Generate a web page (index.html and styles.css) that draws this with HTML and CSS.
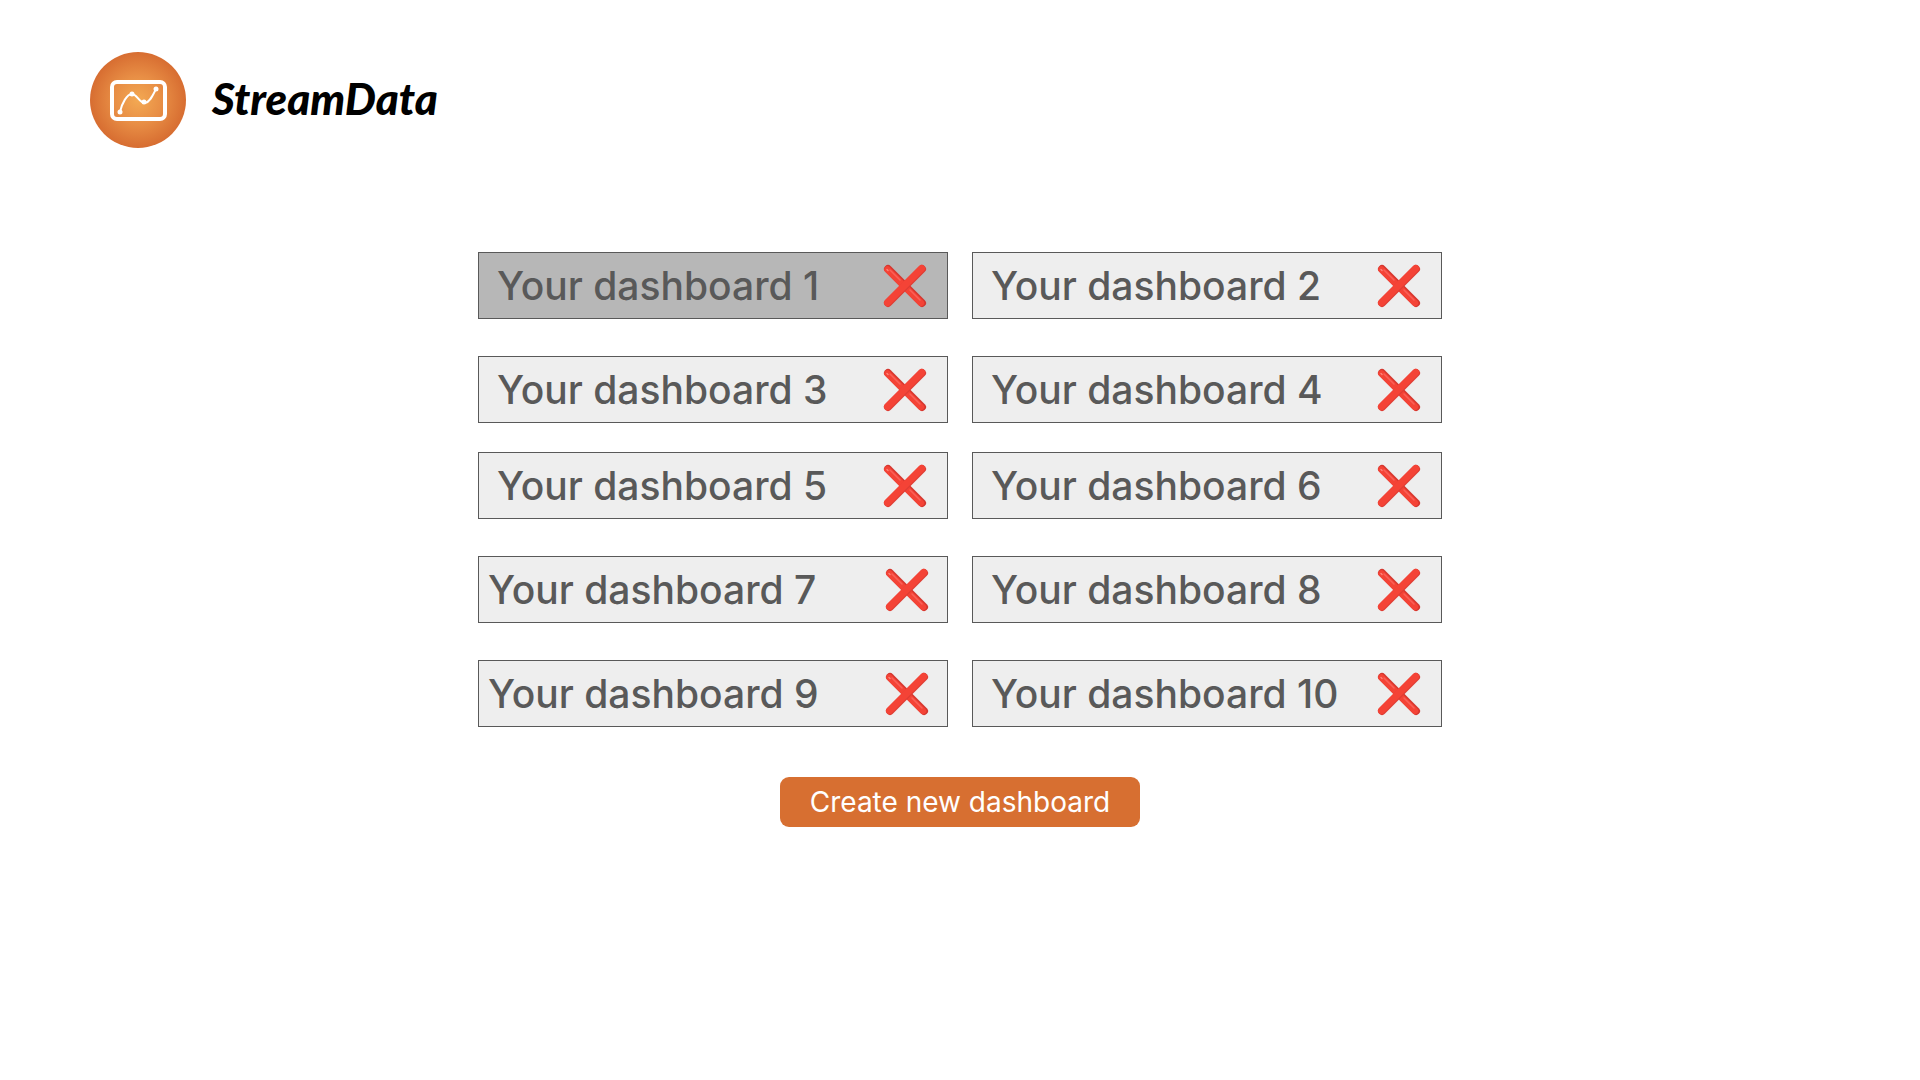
FILE: index.html
```html
<!DOCTYPE html>
<html lang="en">
<head>
<meta charset="utf-8">
<meta name="viewport" content="width=device-width, initial-scale=1">
<title>StreamData</title>
<link rel="stylesheet" href="styles.css">
</head>
<body>
<svg class="defs" width="0" height="0" aria-hidden="true">
  <symbol id="cross" viewBox="0 0 44 44">
    <g fill="none" stroke-linecap="round">
      <path d="M5 5 39 39" stroke="#d4372f" stroke-width="8"/>
      <path d="M4.500 5.500 38 39" stroke="#f44336" stroke-width="6.500"/>
      <path d="M7 6 17 16M27 26 37 36" stroke="#fa6058" stroke-width="1.500"/>
      <path d="M39 5 5 39" stroke="#dd3d34" stroke-width="8"/>
      <path d="M38.500 4.500 4.500 38.500" stroke="#f44336" stroke-width="7"/>
      <path d="M4 5.500 5 6.500" stroke="#ff8178" stroke-width="1.500"/>
    </g>
  </symbol>
</svg>
<header class="header">
  <a class="brand" href="#">
    <svg class="brand-mark" viewBox="0 0 96 96" aria-hidden="true">
      <defs>
        <radialGradient id="glow">
          <stop offset="0" stop-color="#f3a953"/>
          <stop offset="0.5" stop-color="#e88e45"/>
          <stop offset="1" stop-color="#d76d31"/>
        </radialGradient>
      </defs>
      <circle cx="48" cy="48" r="48" fill="url(#glow)"/>
      <rect x="22" y="30" width="53" height="37" rx="5" fill="none" stroke="#fff" stroke-width="4"/>
      <path d="M30 60C32 51 37 42 42 42C47 42 49 51 55 51C60 50 63 43 66 37" fill="none" stroke="#fff" stroke-width="2"/>
      <g fill="#fff"><circle cx="30" cy="60" r="2.500"/><circle cx="42" cy="42" r="2.500"/><circle cx="54" cy="50" r="2.500"/><circle cx="66" cy="37" r="2.500"/></g>
    </svg>
    <span class="brand-name">StreamData</span>
  </a>
</header>
<main class="main">
  <ul class="group">
    <li class="card card-active"><a class="card-link" href="#">Your dashboard 1</a><button class="remove" type="button" aria-label="Delete dashboard 1"><svg class="cross"><use href="#cross"/></svg></button></li>
    <li class="card"><a class="card-link" href="#">Your dashboard 2</a><button class="remove" type="button" aria-label="Delete dashboard 2"><svg class="cross"><use href="#cross"/></svg></button></li>
    <li class="card"><a class="card-link" href="#">Your dashboard 3</a><button class="remove" type="button" aria-label="Delete dashboard 3"><svg class="cross"><use href="#cross"/></svg></button></li>
    <li class="card"><a class="card-link" href="#">Your dashboard 4</a><button class="remove" type="button" aria-label="Delete dashboard 4"><svg class="cross"><use href="#cross"/></svg></button></li>
  </ul>
  <ul class="group">
    <li class="card"><a class="card-link" href="#">Your dashboard 5</a><button class="remove" type="button" aria-label="Delete dashboard 5"><svg class="cross"><use href="#cross"/></svg></button></li>
    <li class="card"><a class="card-link" href="#">Your dashboard 6</a><button class="remove" type="button" aria-label="Delete dashboard 6"><svg class="cross"><use href="#cross"/></svg></button></li>
    <li class="card card-wide"><a class="card-link" href="#">Your dashboard 7</a><button class="remove" type="button" aria-label="Delete dashboard 7"><svg class="cross"><use href="#cross"/></svg></button></li>
    <li class="card"><a class="card-link" href="#">Your dashboard 8</a><button class="remove" type="button" aria-label="Delete dashboard 8"><svg class="cross"><use href="#cross"/></svg></button></li>
    <li class="card card-wide"><a class="card-link" href="#">Your dashboard 9</a><button class="remove" type="button" aria-label="Delete dashboard 9"><svg class="cross"><use href="#cross"/></svg></button></li>
    <li class="card"><a class="card-link" href="#">Your dashboard 10</a><button class="remove" type="button" aria-label="Delete dashboard 10"><svg class="cross"><use href="#cross"/></svg></button></li>
  </ul>
  <button class="create" type="button">Create new dashboard</button>
</main>
</body>
</html>
```
FILE: styles.css
```css
* {
  box-sizing: border-box;
}

body {
  margin: 0;
  background: #fff;
  color: #595959;
  font-family: Inter, "Liberation Sans", sans-serif;
}

.defs {
  position: absolute;
}

.header {
  display: flex;
  padding: 52px 90px 0;
}

.brand {
  display: flex;
  align-items: center;
  gap: 26px;
  color: #000;
  text-decoration: none;
}

.brand-mark {
  width: 96px;
  height: 96px;
}

.brand-name {
  padding-bottom: 4px;
  font-family: Lato, "Liberation Sans", cursive;
  font-size: 44px;
  font-style: italic;
  font-weight: 900;
  line-height: 56px;
}

.main {
  display: flex;
  flex-direction: column;
  align-items: center;
  padding: 104px 24px 48px;
}

.group {
  display: grid;
  grid-template-columns: 1fr 1fr;
  gap: 37px 24px;
  width: 100%;
  max-width: 964px;
  margin: 0;
  padding: 0;
  list-style: none;
}

.group + .group {
  margin-top: 29px;
}

.card {
  display: flex;
  align-items: center;
  justify-content: space-between;
  padding: 8px 20px 8px 18px;
  border: 1px solid #595959;
  background: #eee;
}

.card-active {
  background: #b7b7b7;
}

.card-wide {
  padding: 8px 18px 8px 9px;
}

.card-link {
  color: inherit;
  font-size: 39px;
  font-weight: 500;
  line-height: 49px;
  text-decoration: none;
}

.remove {
  display: flex;
  padding: 0;
  border: 0;
  background: none;
  cursor: pointer;
}

.cross {
  width: 44px;
  height: 44px;
}

.create {
  margin-top: 50px;
  padding: 8px 24px;
  min-width: 360px;
  border: 0;
  border-radius: 9px;
  background: #d76f31;
  color: #fff;
  font-family: inherit;
  font-size: 28px;
  line-height: 34px;
  cursor: pointer;
}
```
